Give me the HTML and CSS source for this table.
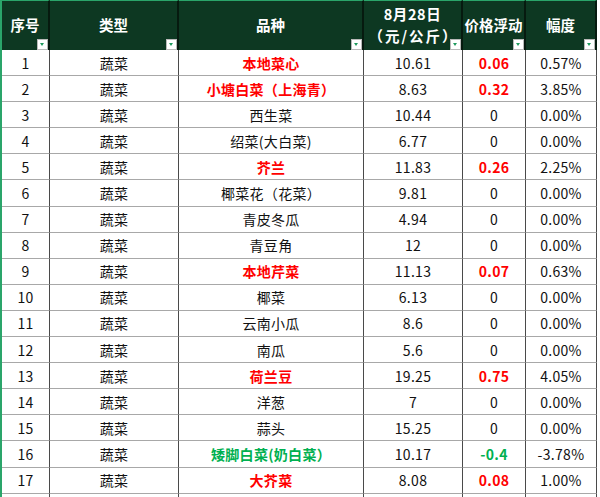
FILE: index.html
```html
<!DOCTYPE html>
<html lang="zh-CN">
<head>
<meta charset="utf-8">
<title>蔬菜价格</title>
<link rel="stylesheet" href="styles.css">
</head>
<body>
<div class="sheet">
  <div class="grid">
    <div class="hd">序号<span class="flt"></span></div>
    <div class="hd">类型<span class="flt"></span></div>
    <div class="hd">品种<span class="flt"></span></div>
    <div class="hd two"><span class="l1">8月28日</span><span class="l2">（元/公斤）</span><span class="flt"></span></div>
    <div class="hd">价格浮动<span class="flt"></span></div>
    <div class="hd">幅度<span class="flt"></span></div>

    <div class="c">1</div><div class="c">蔬菜</div><div class="c red">本地菜心</div><div class="c">10.61</div><div class="c red">0.06</div><div class="c">0.57%</div>
    <div class="c">2</div><div class="c">蔬菜</div><div class="c red">小塘白菜（上海青）</div><div class="c">8.63</div><div class="c red">0.32</div><div class="c">3.85%</div>
    <div class="c">3</div><div class="c">蔬菜</div><div class="c">西生菜</div><div class="c">10.44</div><div class="c">0</div><div class="c">0.00%</div>
    <div class="c">4</div><div class="c">蔬菜</div><div class="c">绍菜(大白菜)</div><div class="c">6.77</div><div class="c">0</div><div class="c">0.00%</div>
    <div class="c">5</div><div class="c">蔬菜</div><div class="c red">芥兰</div><div class="c">11.83</div><div class="c red">0.26</div><div class="c">2.25%</div>
    <div class="c">6</div><div class="c">蔬菜</div><div class="c">椰菜花（花菜）</div><div class="c">9.81</div><div class="c">0</div><div class="c">0.00%</div>
    <div class="c">7</div><div class="c">蔬菜</div><div class="c">青皮冬瓜</div><div class="c">4.94</div><div class="c">0</div><div class="c">0.00%</div>
    <div class="c">8</div><div class="c">蔬菜</div><div class="c">青豆角</div><div class="c">12</div><div class="c">0</div><div class="c">0.00%</div>
    <div class="c">9</div><div class="c">蔬菜</div><div class="c red">本地芹菜</div><div class="c">11.13</div><div class="c red">0.07</div><div class="c">0.63%</div>
    <div class="c">10</div><div class="c">蔬菜</div><div class="c">椰菜</div><div class="c">6.13</div><div class="c">0</div><div class="c">0.00%</div>
    <div class="c">11</div><div class="c">蔬菜</div><div class="c">云南小瓜</div><div class="c">8.6</div><div class="c">0</div><div class="c">0.00%</div>
    <div class="c">12</div><div class="c">蔬菜</div><div class="c">南瓜</div><div class="c">5.6</div><div class="c">0</div><div class="c">0.00%</div>
    <div class="c">13</div><div class="c">蔬菜</div><div class="c red">荷兰豆</div><div class="c">19.25</div><div class="c red">0.75</div><div class="c">4.05%</div>
    <div class="c">14</div><div class="c">蔬菜</div><div class="c">洋葱</div><div class="c">7</div><div class="c">0</div><div class="c">0.00%</div>
    <div class="c">15</div><div class="c">蔬菜</div><div class="c">蒜头</div><div class="c">15.25</div><div class="c">0</div><div class="c">0.00%</div>
    <div class="c">16</div><div class="c">蔬菜</div><div class="c green">矮脚白菜(奶白菜）</div><div class="c">10.17</div><div class="c green">-0.4</div><div class="c">-3.78%</div>
    <div class="c">17</div><div class="c">蔬菜</div><div class="c red">大芥菜</div><div class="c">8.08</div><div class="c red">0.08</div><div class="c">1.00%</div>
    <div class="c"></div><div class="c"></div><div class="c"></div><div class="c"></div><div class="c"></div><div class="c"></div>
  </div>
</div>
</body>
</html>
```
FILE: styles.css
```css
html, body {
  margin: 0;
  padding: 0;
  background: #ffffff;
  overflow: hidden;
}
body {
  width: 600px;
  height: 497px;
  font-family: "Noto Sans CJK SC", "Noto Sans", sans-serif;
  color: #111;
}
.sheet {
  border-left: 2px solid #2aa56a;
  height: 497px;
  overflow: hidden;
}
.grid {
  display: grid;
  grid-template-columns: 48px 129px 185px 99px 63px 71px;
  grid-auto-rows: 26.1px;
  grid-template-rows: 50px;
  width: 595px;
}
.hd {
  position: relative;
  box-sizing: border-box;
  background: #0d3822;
  border-top: 1px solid #2aa56a;
  border-right: 2px solid #061a0f;
  color: #fff;
  font-weight: bold;
  font-size: 14.5px;
  display: flex;
  align-items: center;
  justify-content: center;
  padding-bottom: 2px;
  white-space: nowrap;
}
.hd.two {
  flex-direction: column;
  line-height: 22px;
  padding-bottom: 1px;
}
.l1 {
  letter-spacing: 0.6px;
}
.l2 {
  letter-spacing: 2px;
  padding-left: 2px;
}
.flt {
  position: absolute;
  right: 0;
  bottom: 0;
  width: 11px;
  height: 11px;
  box-sizing: border-box;
  background: #fff;
  border: 1px solid #b9b9b9;
}
.flt::after {
  content: "";
  position: absolute;
  left: 2px;
  top: 3px;
  border-left: 2.5px solid transparent;
  border-right: 2.5px solid transparent;
  border-top: 3px solid #1f9a5e;
}
.c {
  box-sizing: border-box;
  border-right: 1px solid #4a4a4a;
  border-bottom: 1px solid #a8a8a8;
  font-size: 14px;
  display: flex;
  align-items: center;
  justify-content: center;
  white-space: nowrap;
  letter-spacing: 0.3px;
}
.red {
  color: #ff0000;
  font-weight: bold;
}
.green {
  color: #00b050;
  font-weight: bold;
}
```
